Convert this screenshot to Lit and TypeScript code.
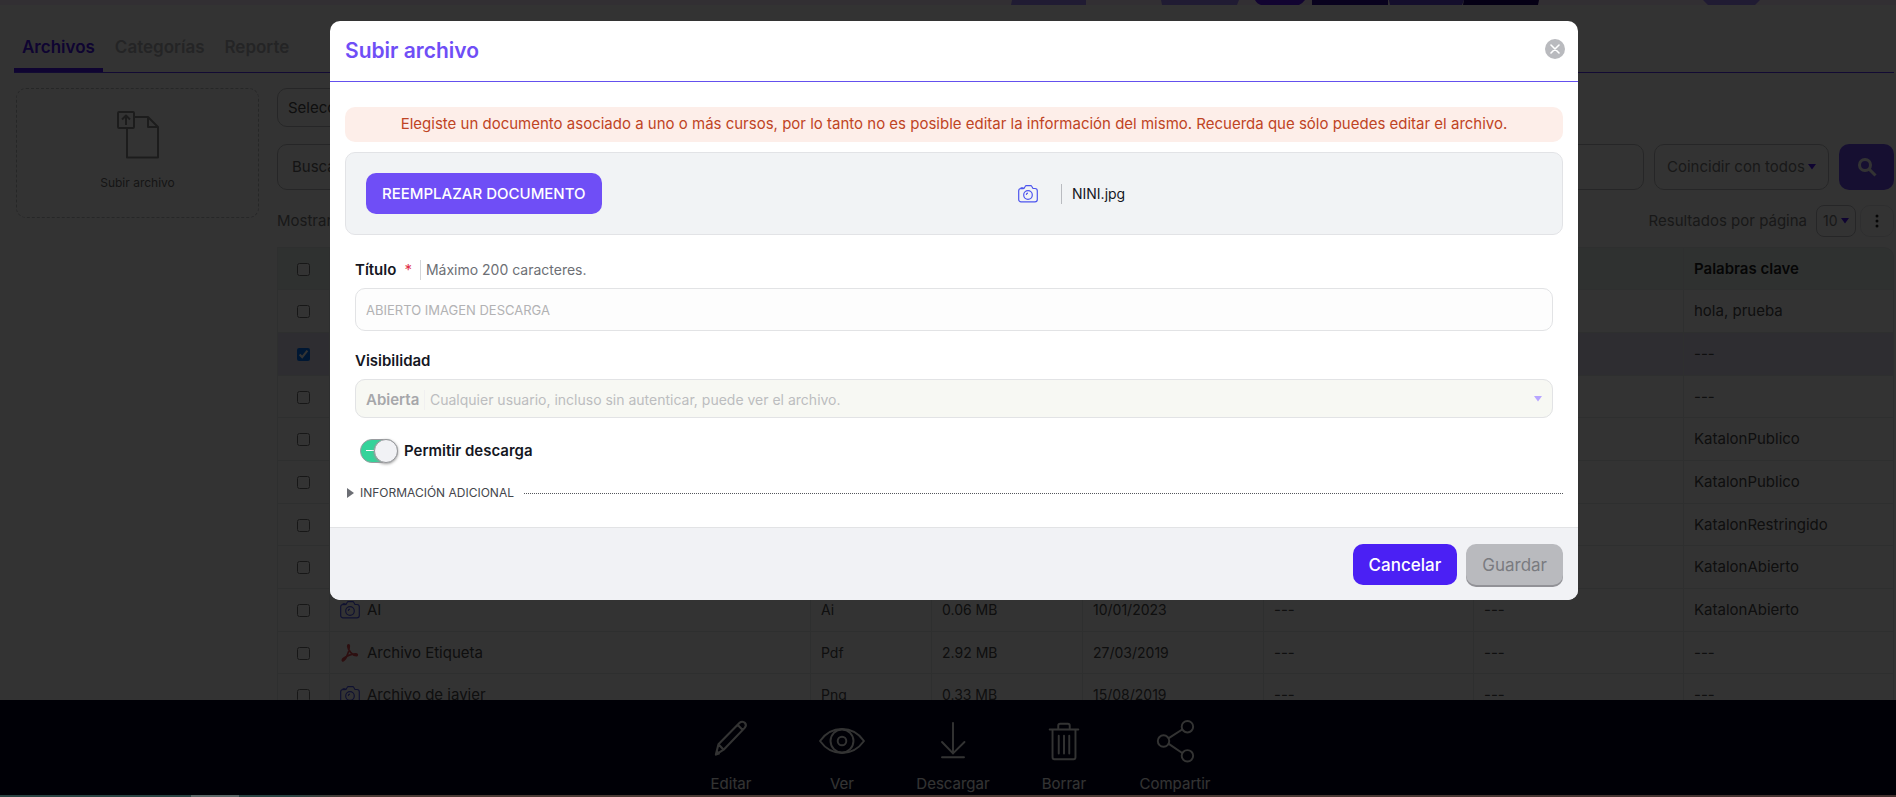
import { LitElement, html, css, svg } from "lit";
import { customElement, state } from "lit/decorators.js";

interface FileRow {
  name: string;
  icon: "image" | "pdf";
  type: string;
  size: string;
  date: string;
  keywords: string;
  checked?: boolean;
}

const EMPTY = "---";

const ROWS: FileRow[] = [
  { name: "Abierto", icon: "image", type: "Jpg", size: "0.01 MB", date: "10/01/2023", keywords: "hola, prueba" },
  { name: "ABIERTO IMAGEN DESCARGA", icon: "image", type: "Jpg", size: "0.01 MB", date: "10/01/2023", keywords: EMPTY, checked: true },
  { name: "Abierto", icon: "image", type: "Jpg", size: "0.01 MB", date: "10/01/2023", keywords: EMPTY },
  { name: "Abierto", icon: "image", type: "Jpg", size: "0.01 MB", date: "10/01/2023", keywords: "KatalonPublico" },
  { name: "Abierto", icon: "image", type: "Jpg", size: "0.01 MB", date: "10/01/2023", keywords: "KatalonPublico" },
  { name: "Abierto", icon: "image", type: "Jpg", size: "0.01 MB", date: "10/01/2023", keywords: "KatalonRestringido" },
  { name: "Abierto", icon: "image", type: "Jpg", size: "0.01 MB", date: "10/01/2023", keywords: "KatalonAbierto" },
  { name: "AI", icon: "image", type: "Ai", size: "0.06 MB", date: "10/01/2023", keywords: "KatalonAbierto" },
  { name: "Archivo Etiqueta", icon: "pdf", type: "Pdf", size: "2.92 MB", date: "27/03/2019", keywords: EMPTY },
  { name: "Archivo de javier", icon: "image", type: "Png", size: "0.33 MB", date: "15/08/2019", keywords: EMPTY },
];

const cameraIcon = html`<svg class="camera" width="20" height="18" viewBox="0 0 20 18" fill="none" stroke="currentColor" stroke-width="1.2" aria-hidden="true">
  <path d="M3 3.500h3l1.300-2.200c.2-.4.5-.6 1-.6h4.400c.5 0 .8.2 1 .6L15 3.500h2c1.300 0 2.300 1 2.300 2.300v8.700c0 1.300-1 2.300-2.300 2.300H3C1.700 16.800.7 15.800.7 14.500V5.800c0-1.300 1-2.300 2.300-2.300z"/>
  <circle cx="10" cy="10" r="4.300"/><path d="M8.300 9.800q.2-1.500 1.700-1.600"/>
  <path d="M2.600 3.200h3" stroke-width="2"/>
</svg>`;

const pdfIcon = html`<svg class="pdf" width="20" height="18" viewBox="0 0 20 18" fill="none" stroke="currentColor" stroke-width="1.700" stroke-linejoin="round" aria-hidden="true">
  <path d="M3 16.800c1.500-.2 6.500-7 6.300-14.800 0-1.500-1.800-1.400-1.600.3.6 4.500 4.800 9.200 8.600 9.300 1.400 0 1.300-1.800-.3-1.800-4.500.1-9.300 2.100-12.700 4.700-1.200 1-1.200 2.400-.3 2.300z"/>
</svg>`;

const caret = html`<svg class="caret" width="8" height="6" viewBox="0 0 8 6" aria-hidden="true"><path d="M0 0h8L4 5.500z" fill="currentColor"/></svg>`;

const ACTIONS = [
  { label: "Editar", art: svg`<path d="M8.500 33.500l2.500-10L31.500 2.700c1.500-1.500 3.700-1.400 5 0s1.300 3.400-.1 4.900L16 28.800l-7.500 4.700zM11 23.500l5 5.300M29.500 4.700l5 5M8.500 33.500l1-3 2 2z" transform="translate(-1 -1) scale(1.080)"/>` },
  { label: "Ver", art: svg`<path d="M1 21C7 12.500 15 8.500 24 8.500S41 12.500 47 21c-6 8.500-14 12.500-23 12.500S7 29.500 1 21z"/><circle cx="24" cy="21" r="12"/><circle cx="24" cy="21" r="4.500"/>` },
  { label: "Descargar", art: svg`<path d="M24 2v32M12.500 22L24 34l12-12M12.500 38H35.500"/>` },
  { label: "Borrar", art: svg`<path d="M9 9h30M18 9V5q0-2 2-2h8q2 0 2 2v4M12 9v29q0 2 2 2h20q2 0 2-2V9M18.500 15.500V34M24 15.500V34M29.500 15.500V34"/>` },
  { label: "Compartir", art: svg`<circle cx="37" cy="6" r="6"/><circle cx="12" cy="21" r="6"/><circle cx="37" cy="36.500" r="6"/><path d="M17.500 18L31.500 9M17.500 24L31.500 33.500"/>` },
];

@customElement("app-root")
export class AppRoot extends LitElement {
  @state() private allowDownload = true;

  static styles = css`
    :host {
      display: block;
      height: 100vh;
      overflow: hidden;
      position: relative;
      background: #fff;
      color: #4a4a4a;
      font: 15px/20px Inter, "Open Sans", sans-serif;
    }
    *, *::before { box-sizing: border-box; }
    button, input, select { font: inherit; color: inherit; margin: 0; }
    button { cursor: pointer; border: 0; padding: 0; }
    svg { display: block; flex: none; }

    .page { height: 100%; display: flex; flex-direction: column; }
    .banner { height: 5px; flex: none; background: #fbebff; }
    .banner svg { width: 100%; height: 5px; }
    .library { flex: 1; min-height: 0; overflow: hidden; padding: 0 2px 0 14px; }

    .tabs {
      display: flex;
      gap: 4px;
      align-items: flex-end;
      height: 68px;
      border-bottom: 1px solid #5a36ff;
    }
    .tab {
      height: 48px;
      padding: 2px 8px 0;
      background: none;
      font-size: 17px;
      font-weight: 600;
      color: #b4b6ba;
      border-bottom: 4px solid transparent;
    }
    .tab.active { color: #4b14f4; border-bottom-color: #4b14f4; }

    .columns { display: flex; gap: 18px; align-items: flex-start; padding: 15px 0 0 2px; }
    .upload {
      width: 243px;
      height: 130px;
      flex: none;
      display: flex;
      flex-direction: column;
      align-items: center;
      gap: 14px;
      padding-top: 22px;
      background: none;
      border: 1px dashed #bfc0c4;
      border-radius: 10px;
      font-size: 12px;
      color: #6a6a6a;
    }
    .upload svg { color: #8b8b8b; }
    .content { flex: 1; min-width: 0; display: flex; flex-direction: column; }

    .stack { display: grid; align-items: center; }
    .stack > * { grid-area: 1 / 1; }
    .stack .caret { justify-self: end; pointer-events: none; color: #4b14f4; }
    select { appearance: none; width: 100%; height: 100%; background: none; border: 1px solid #bdbec2; border-radius: 10px; }
    .category { width: 320px; height: 39px; }
    .category select { padding: 0 10px; }
    .category .caret, .match .caret { margin-right: 13px; }
    .filters { display: flex; gap: 10px; height: 46px; margin-top: 17px; color: #7a7a7a; }
    .search { flex: 1; min-width: 0; background: none; border: 1px solid #bdbec2; border-radius: 10px; padding: 0 14px; }
    .search::placeholder { color: #666; opacity: 1; }
    .match { width: 175px; }
    .match select { padding: 0 12px; }
    .find { width: 55px; border-radius: 10px; background: #6f4ef6; color: #fff; display: grid; place-items: center; }
    .paging { display: flex; align-items: center; height: 32px; margin: 15px 0 10px; color: #7a7a7a; }
    .paging .shown { margin-right: auto; }
    .size { width: 40px; height: 32px; margin: 0 4px 0 9px; }
    .size select { padding: 0 6px; border-radius: 8px; font-size: 14px; }
    .size .caret { margin-right: 7px; }
    .more { width: 34px; height: 32px; background: none; border: 1px solid #e6e6e9; border-radius: 10px; display: grid; place-items: center; color: #222; }

    table { width: 100%; table-layout: fixed; border-collapse: separate; border-spacing: 0; border-left: 1px solid #e6e8ea; }
    .c-check { width: 52px; } .c-type { width: 121px; } .c-size { width: 151px; } .c-date { width: 181px; } .c-wide { width: 210px; }
    th, td { padding: 0 10px; text-align: left; border: 0 solid #e6e8ea; border-width: 0 1px 1px 0; white-space: nowrap; overflow: hidden; }
    th { height: 43px; background: #eaf5f1; border-top-width: 1px; font-weight: 600; color: #222; }
    th:last-child { border-top-right-radius: 10px; }
    td { height: 43px; }
    tbody tr:nth-child(3n) td { height: 42px; }
    td.fact { font-size: 14px; }
    .pick { text-align: center; padding: 0; }
    .pick input { width: 13px; height: 13px; vertical-align: middle; }
    tr.on td { background: #e3dff6; }
    .file { display: flex; align-items: center; gap: 7px; }
    .camera { color: #4d55ee; }
    .pdf { color: #e04a50; }

    .actions { flex: none; display: flex; justify-content: center; height: 95px; padding: 20px 0 0 10px; background: #00041e; }
    .action { width: 111px; background: none; color: #fff; display: flex; flex-direction: column; align-items: center; gap: 11px; }
    .action svg { fill: none; stroke: currentColor; stroke-width: 2; stroke-linecap: round; stroke-linejoin: round; }
    .edge { flex: none; height: 2px; background: #3b3230; }

    .overlay {
      position: absolute;
      inset: 0;
      display: flex;
      justify-content: center;
      align-items: flex-start;
      padding: 21px 0 0 12px;
      background: rgba(0, 0, 0, 0.8);
    }
    .shelf {
      position: absolute;
      inset: auto 0 0 0;
      height: 2px;
      background: linear-gradient(90deg, #2a4443 0 191px, #5b6867 191px 239px, #2a4443 239px 290px, #4a3a34 350px 60%, #42302e);
    }
    .modal { width: 1248px; max-width: 100%; background: #fff; border-radius: 10px; overflow: hidden; color: #15171f; }
    .modal-head { display: flex; justify-content: space-between; height: 61px; padding: 15px 13px 0 15px; border-bottom: 1px solid #6450ee; }
    h2 { margin: 0; font-size: 21px; line-height: 30px; font-weight: 600; color: #6f4ef6; }
    .close { width: 20px; height: 20px; margin-top: 3px; border-radius: 50%; background: #b9babe; color: #fff; display: grid; place-items: center; }
    .modal-body { padding: 25px 15px 24px; }
    .alert { padding: 7px 10px 8px; border-radius: 10px; background: #fdeee9; color: #bf4424; text-align: center; }
    .document { display: grid; grid-template-columns: 1fr 1fr; align-items: center; height: 83px; margin-top: 10px; padding: 0 20px; background: #f1f3f5; border: 1px solid #e2e3e6; border-radius: 10px; }
    .btn { height: 41px; padding: 0 16px; border-radius: 10px; font-size: 17px; color: #fff; }
    .replace { justify-self: start; background: #6f4ef6; font-size: 15px; font-weight: 500; }
    .picked { display: flex; align-items: center; padding-left: 64px; font-size: 14px; }
    .picked span { margin-left: 23px; padding-left: 10px; border-left: 1px solid #b9bbc0; }

    .fields { padding: 25px 10px 0; }
    .caption { display: flex; align-items: center; height: 20px; font-weight: 600; }
    .required { margin-left: 8px; color: #e0314b; font-weight: 400; }
    .hint { margin-left: 8px; padding-left: 5px; border-left: 1px solid #d5d6d9; font-size: 14px; font-weight: 400; color: #6d6f75; }
    .title { display: block; width: 100%; height: 43px; margin: 8px 0 20px; padding: 0 10px; background: #fdfdfd; border: 1px solid #e2e3e5; border-radius: 10px; color: #b2b2b4; font-size: 13px; }
    .visibility { height: 39px; margin-top: 8px; background: #f7f8f3; border-radius: 10px; }
    .visibility select { opacity: 1; padding: 2px 10px 0; border-color: #e2e3e5; font-weight: 600; color: #a6a7aa; }
    .visibility span { justify-self: start; margin: 2px 0 0 69px; padding-left: 5px; border-left: 1px solid #f0f0f0; pointer-events: none; font-size: 14px; color: #bcbdbf; }
    .visibility .caret { color: #b7a5ff; margin-right: 11px; }

    .permit { display: flex; align-items: center; gap: 6px; margin: 21px 0 0 5px; font-weight: 600; }
    .toggle {
      appearance: none;
      display: flex;
      align-items: center;
      justify-content: flex-end;
      width: 38px;
      height: 24px;
      border-radius: 12px;
      border: 1px solid #9a9ca0;
      background: linear-gradient(#fff, #fff) 5px 10px / 8px 1px no-repeat #34d39a;
    }
    .toggle::before { content: ""; width: 24px; height: 24px; margin: -1px; border-radius: 50%; background: #f1f2f5; border: 1px solid #98989c; box-shadow: 0 1px 3px #999; }
    .toggle:not(:checked) { justify-content: flex-start; background: #ccc; }

    summary { display: flex; align-items: center; gap: 6px; height: 20px; margin: 20px 0 0 2px; list-style: none; font-size: 12px; color: #44464c; cursor: pointer; }
    summary::after { content: ""; flex: 1; margin-left: 4px; border-top: 1px dotted #55575c; }
    .modal-foot { display: flex; justify-content: flex-end; gap: 9px; height: 73px; padding: 16px 15px 0; background: #f1f2f5; border-top: 1px solid #e2e3e5; }
    .cancel { background: #4b20f4; font-weight: 500; }
    .save { background: #b9babe; color: #7a7b80; box-shadow: 0 2px #929297; }
  `;

  render() {
    return html`
      <div class="page">
        <header class="banner">
          <svg viewBox="0 0 1896 5" preserveAspectRatio="none" aria-hidden="true">
            <path d="M1012 0h74v5h-75z M1161 0h78l-2 5h-75z M1703 0h57l-5 5h-47z" fill="#9f86ff"/>
            <path d="M1255 0h50q-3 4-6 5h-38q-4-1-6-5z" fill="#5a14f5"/>
            <path d="M1312 0h76v5h-76z" fill="#300a96"/>
            <path d="M1389 0h75l-2 5h-72z" fill="#6446dc"/>
            <path d="M1464 0h75l-1 5h-75z" fill="#190069"/>
          </svg>
        </header>
        <main class="library">
          <nav class="tabs">
            <button class="tab active">Archivos</button>
            <button class="tab">Categorías</button>
            <button class="tab">Reporte</button>
          </nav>
          <div class="columns">
            <button class="upload">
              <svg width="42" height="48" viewBox="0 0 42 48" fill="none" stroke="currentColor" stroke-width="2" stroke-linejoin="round" aria-hidden="true">
                <rect x="1" y="1" width="16" height="16" rx="1"/>
                <path d="M9 14V5M5 8.500l4-4 4 4M17 6h14l10 10v30.500H10V17M31 6v10h10"/>
              </svg>
              Subir archivo
            </button>
            <section class="content">
              <div class="stack category">
                <select aria-label="Categoría"><option>Selecciona una categoría</option></select>${caret}
              </div>
              <div class="filters">
                <input class="search" type="text" placeholder="Buscar" aria-label="Buscar">
                <div class="stack match">
                  <select aria-label="Coincidencia"><option>Coincidir con todos</option></select>${caret}
                </div>
                <button class="find" aria-label="Buscar">
                  <svg width="20" height="20" viewBox="0 0 20 20" fill="none" stroke="currentColor" aria-hidden="true">
                    <circle cx="8" cy="8" r="5.500" stroke-width="3"/><path d="M12 12l6.500 6.500" stroke-width="3"/>
                  </svg>
                </button>
              </div>
              <div class="paging">
                <span class="shown">Mostrando</span>
                <label for="size">Resultados por página</label>
                <div class="stack size"><select id="size"><option>10</option></select>${caret}</div>
                <button class="more" aria-label="Más opciones">
                  <svg width="4" height="14" viewBox="0 0 4 14" fill="currentColor" aria-hidden="true"><circle cx="2" cy="2" r="1.500"/><circle cx="2" cy="7" r="1.500"/><circle cx="2" cy="12" r="1.500"/></svg>
                </button>
              </div>
              <table>
                <colgroup>
                  <col class="c-check"><col><col class="c-type"><col class="c-size"><col class="c-date">
                  <col class="c-wide"><col class="c-wide"><col class="c-wide">
                </colgroup>
                <thead>
                  <tr>
                    <th class="pick"><input type="checkbox" aria-label="Seleccionar todo"></th>
                    <th>Título</th><th>Tipo</th><th>Tamaño</th><th>Fecha</th><th>Categoría</th><th>Cursos</th><th>Palabras clave</th>
                  </tr>
                </thead>
                <tbody>
                  ${ROWS.map((r) => html`
                    <tr class=${r.checked ? "on" : ""}>
                      <td class="pick"><input type="checkbox" .checked=${!!r.checked} aria-label=${r.name}></td>
                      <td><div class="file">${r.icon === "pdf" ? pdfIcon : cameraIcon}${r.name}</div></td>
                      <td class="fact">${r.type}</td><td class="fact">${r.size}</td><td class="fact">${r.date}</td>
                      <td>${EMPTY}</td><td>${EMPTY}</td><td>${r.keywords}</td>
                    </tr>`)}
                </tbody>
              </table>
            </section>
          </div>
        </main>
        <footer class="actions">
          ${ACTIONS.map((a) => html`
            <button class="action"><svg width="50" height="43" viewBox="-1 -1 50 45" aria-hidden="true">${a.art}</svg>${a.label}</button>`)}
        </footer>
        <div class="edge"></div>
      </div>

      <div class="overlay">
        <div class="modal" role="dialog" aria-modal="true" aria-labelledby="heading">
          <header class="modal-head">
            <h2 id="heading">Subir archivo</h2>
            <button class="close" aria-label="Cerrar">
              <svg width="10" height="10" viewBox="0 0 10 10" stroke="currentColor" stroke-width="1.600" stroke-linecap="round" aria-hidden="true"><path d="M1 1l8 8M9 1l-8 8"/></svg>
            </button>
          </header>
          <div class="modal-body">
            <div class="alert" role="alert">Elegiste un documento asociado a uno o más cursos, por lo tanto no es posible editar la información del mismo. Recuerda que sólo puedes editar el archivo.</div>
            <div class="document">
              <button class="btn replace">REEMPLAZAR DOCUMENTO</button>
              <div class="picked">${cameraIcon}<span>NINI.jpg</span></div>
            </div>
            <div class="fields">
              <div class="caption">
                <label for="title">Título</label><span class="required">*</span><span class="hint">Máximo 200 caracteres.</span>
              </div>
              <input class="title" id="title" type="text" value="ABIERTO IMAGEN DESCARGA" disabled>
              <label class="caption" for="visibility">Visibilidad</label>
              <div class="stack visibility">
                <select id="visibility" disabled><option>Abierta</option></select>
                <span>Cualquier usuario, incluso sin autenticar, puede ver el archivo.</span>${caret}
              </div>
              <label class="permit">
                <input class="toggle" type="checkbox" .checked=${this.allowDownload}
                  @change=${(e: Event) => (this.allowDownload = (e.target as HTMLInputElement).checked)}>
                Permitir descarga
              </label>
            </div>
            <details>
              <summary>
                <svg width="7" height="10" viewBox="0 0 7 10" aria-hidden="true"><path d="M0 0l7 5-7 5z" fill="#6c6e74"/></svg>
                INFORMACIÓN ADICIONAL
              </summary>
            </details>
          </div>
          <footer class="modal-foot">
            <button class="btn cancel">Cancelar</button>
            <button class="btn save" disabled>Guardar</button>
          </footer>
        </div>
      </div>
      <div class="shelf"></div>
    `;
  }
}
